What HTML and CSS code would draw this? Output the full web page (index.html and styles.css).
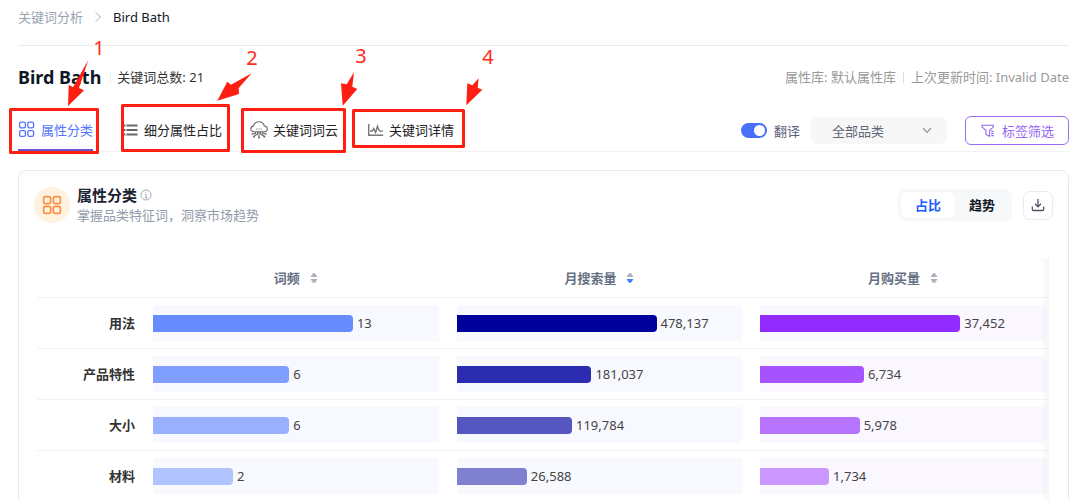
FILE: index.html
```html
<!DOCTYPE html>
<html lang="zh-CN">
<head>
<meta charset="utf-8">
<title>关键词分析 - Bird Bath</title>
<link rel="stylesheet" href="styles.css">
</head>
<body>
<div class="page">
  <nav class="breadcrumb">
    <a href="#" class="crumb">关键词分析</a>
    <svg class="crumb-sep" viewBox="0 0 8 12" width="8" height="12"><path d="M1.5 1.5 6.5 6l-5 4.5"/></svg>
    <span class="crumb-current">Bird Bath</span>
  </nav>

  <header class="heading">
    <h1 class="title">Bird Bath</h1>
    <span class="total">关键词总数: 21</span>
    <div class="meta"><span>属性库: 默认属性库</span><span class="meta-sep"></span><span>上次更新时间: Invalid Date</span></div>
  </header>

  <div class="toolbar">
    <div class="tabs">
      <button class="tab tab-active" type="button">
        <svg class="tab-icon" viewBox="0 0 18 18"><g fill="none" stroke="currentColor" stroke-width="1.3"><rect x="1.6" y="1.1" width="5.8" height="5.8" rx="1.6"/><rect x="9.8" y="1.1" width="5.8" height="5.8" rx="1.6"/><rect x="1.6" y="9.6" width="5.8" height="5.8" rx="1.6"/><rect x="9.8" y="9.6" width="5.8" height="5.8" rx="1.6"/></g></svg>
        属性分类
      </button>
      <button class="tab" type="button">
        <svg class="tab-icon" viewBox="0 0 18 18"><path d="M2.500 4.500h2M2.500 9h2M2.500 13.500h2M5.500 4.500h11M5.500 9h11M5.500 13.500h11" stroke="#6a666c" stroke-width="2"/></svg>
        细分属性占比
      </button>
      <button class="tab" type="button">
        <svg class="tab-icon" viewBox="0 0 18 18"><g fill="none" stroke="#666" stroke-width="1.1"><path d="M4.400 10.800H4C2.200 10.800.8 9.500.8 7.900c0-1.500 1.100-2.600 2.700-2.800C4.100 2.500 6.300.8 9 .8s4.700 1.700 5.300 4.200c1.800.1 3 1.400 3 2.900 0 1.700-1.400 2.900-3.200 2.900h-.6"/><path d="M6.300 8h1M8.500 8h1M10.700 8h1M4.400 10.800h9.200M7.400 10.800v2.400L4 15.300M9 10.800v5M10.700 10.800v2.400l3.600 2.100M5.400 11v1.800H2.800M12.700 11v1.800h2.800"/></g><g fill="#666"><circle cx="2.500" cy="12.800" r=".9"/><circle cx="15.700" cy="12.800" r=".9"/><circle cx="3.900" cy="15.800" r="1"/><circle cx="14.300" cy="15.800" r="1"/><circle cx="9" cy="16.400" r="1"/></g></svg>
        关键词词云
      </button>
      <button class="tab" type="button">
        <svg class="tab-icon" viewBox="0 0 18 18"><g fill="none" stroke="#777" stroke-width="1.4"><path d="M2.700 3v11.300h14.500"/><path d="M4 10h2.200l1.500-2.500 1.900 4 1.900-6.300 1.500 4 1 .9H17"/></g></svg>
        关键词详情
      </button>
    </div>
    <div class="filters">
      <label class="switch-field">
        <input class="switch" type="checkbox" role="switch" checked>
        翻译
      </label>
      <div class="select-box">
        <select class="select" aria-label="品类"><option>全部品类</option></select>
        <svg class="select-arrow" viewBox="0 0 10 7" width="10" height="7"><path d="m1 1 4 4.4L9 1"/></svg>
      </div>
      <button class="tag-button" type="button">
        <svg viewBox="0 0 14 14" width="14" height="14"><path d="M1 1.2h11.4v1.6L8.6 6.6v5.7L5 10.400V6.600L1 2.800zM10.200 7.200h2.600M10.200 9.400h2.600M10.200 11.600h2.600" fill="none" stroke="currentColor" stroke-width="1.1"/></svg>
        标签筛选
      </button>
    </div>
  </div>

  <section class="card">
    <div class="card-head">
      <div class="badge"><svg viewBox="0 0 20 20" width="20" height="20"><g fill="none" stroke="#ff8f45" stroke-width="1.7"><rect x="1.6" y="1.6" width="7" height="7" rx="1.8"/><rect x="11.4" y="1.6" width="7" height="7" rx="1.8"/><rect x="1.6" y="11.4" width="7" height="7" rx="1.8"/><rect x="11.4" y="11.4" width="7" height="7" rx="1.8"/></g></svg></div>
      <div class="card-text">
        <h2 class="card-title">属性分类
          <svg viewBox="0 0 12 12" width="12" height="12"><g fill="none" stroke="#a3abb9"><circle cx="6" cy="6" r="5"/><path d="M5 5.4h1.2V9M4.8 9h2.6M5.4 3.2h1"/></g></svg>
        </h2>
        <p class="card-sub">掌握品类特征词，洞察市场趋势</p>
      </div>
      <div class="segment">
        <button class="segment-item segment-on" type="button">占比</button>
        <button class="segment-item" type="button">趋势</button>
      </div>
      <button class="download" type="button" aria-label="下载">
        <svg viewBox="0 0 14 14" width="14" height="14"><path d="M7 1v7.6M4 5.8l3 3 3-3M1.3 8.6v2.6c0 .8.5 1.3 1.3 1.3h8.8c.8 0 1.3-.5 1.3-1.3V8.6" fill="none" stroke="#4b5565" stroke-width="1.3"/></svg>
      </button>
    </div>

    <div class="table-wrap">
      <table class="table">
        <colgroup><col class="col-name"><col class="col-data"><col class="col-data"><col></colgroup>
        <thead>
          <tr>
            <td></td>
            <th scope="col"><button class="sort" type="button">词频 <svg viewBox="0 0 8 12" width="8" height="12"><path d="M.5 5 3 1.3h2L7.5 5z"/><path d="M.5 7 3 10.7h2L7.5 7z"/></svg></button></th>
            <th scope="col"><button class="sort" type="button">月搜索量 <svg viewBox="0 0 8 12" width="8" height="12"><path d="M.5 5 3 1.3h2L7.5 5z"/><path class="sort-on" d="M.5 7 3 10.7h2L7.5 7z"/></svg></button></th>
            <th scope="col"><button class="sort" type="button">月购买量 <svg viewBox="0 0 8 12" width="8" height="12"><path d="M.5 5 3 1.3h2L7.5 5z"/><path d="M.5 7 3 10.7h2L7.5 7z"/></svg></button></th>
          </tr>
        </thead>
        <tbody>
          <tr>
            <th scope="row">用法</th>
            <td><div class="track"><div class="bar" style="width:70%;background:#668cff"></div>13</div></td>
            <td><div class="track"><div class="bar" style="width:70%;background:#00009c"></div>478,137</div></td>
            <td><div class="track track-buy"><div class="bar" style="width:70%;background:#922bff"></div>37,452</div></td>
          </tr>
          <tr>
            <th scope="row">产品特性</th>
            <td><div class="track"><div class="bar" style="width:47.7%;background:#809eff"></div>6</div></td>
            <td><div class="track"><div class="bar" style="width:47.2%;background:#2c2cb0"></div>181,037</div></td>
            <td><div class="track track-buy"><div class="bar" style="width:36.3%;background:#a552ff"></div>6,734</div></td>
          </tr>
          <tr>
            <th scope="row">大小</th>
            <td><div class="track"><div class="bar" style="width:47.7%;background:#99b0ff"></div>6</div></td>
            <td><div class="track"><div class="bar" style="width:40.4%;background:#5656c0"></div>119,784</div></td>
            <td><div class="track track-buy"><div class="bar" style="width:34.8%;background:#b774ff"></div>5,978</div></td>
          </tr>
          <tr>
            <th scope="row">材料</th>
            <td><div class="track"><div class="bar" style="width:28%;background:#b2c4ff"></div>2</div></td>
            <td><div class="track"><div class="bar" style="width:24.6%;background:#8080d0"></div>26,588</div></td>
            <td><div class="track track-buy"><div class="bar" style="width:24.1%;background:#ca97ff"></div>1,734</div></td>
          </tr>
        </tbody>
      </table>
    </div>
  </section>

  <svg class="notes" width="520" height="160" viewBox="0 0 520 160">
    <g class="note-box">
      <rect x="10.5" y="109.5" width="87" height="43"/>
      <rect x="122.5" y="105.5" width="106" height="45"/>
      <rect x="242.5" y="109.5" width="102" height="42"/>
      <rect x="353.5" y="110.5" width="110" height="36"/>
    </g>
    <g class="note-arrow">
      <path d="M68 106 68.700 84.700 73 87.300 88.300 60 79 88 84 90.300z"/>
      <path d="M217.300 100.700 227.300 81.700 231 84.700 251.700 73.300 238.700 88 239 94z"/>
      <path d="M342.700 105.700 341 83.300 346.700 84.300 354 72.300 352.300 86.700 357.300 89z"/>
      <path d="M466.300 105.300 467.300 83.300 472.300 85.300 478.700 78.300 477.700 87.700 482.300 89.700z"/>
    </g>
    <g class="note-number">
      <text x="99" y="55">1</text>
      <text x="252" y="65">2</text>
      <text x="361" y="63">3</text>
      <text x="488" y="64">4</text>
    </g>
  </svg>
</div>
</body>
</html>
```
FILE: styles.css
```css
* { box-sizing: border-box; }

body {
  margin: 0;
  background: #fff;
  color: #333;
  font: 13px/20px "Noto Sans", "Noto Sans CJK SC", sans-serif;
}

button, select { font: inherit; color: inherit; }
button { border: 0; background: none; padding: 0; cursor: pointer; }
svg { display: block; flex: none; }

.page {
  position: relative;
  height: 100vh;
  padding: 0 11px 0 18px;
  overflow: hidden;
}

.breadcrumb {
  display: flex;
  align-items: center;
  gap: 11px;
  padding: 7px 0 18px;
  border-bottom: 1px solid #ebebee;
}
.crumb { color: #9aa3b2; text-decoration: none; }
.crumb-sep { fill: none; stroke: #ccd1dc; stroke-width: 1.3; }
.crumb-current { color: #101828; }

.heading {
  display: flex;
  align-items: center;
  padding: 19px 0;
}
.title {
  margin: 0;
  color: #101828;
  font-size: 18px;
  line-height: 24px;
  padding-right: 9px;
}
.total { position: relative; padding-left: 7px; }
.total::before, .meta-sep {
  content: "";
  width: 1px;
  height: 11px;
  background: #ddd;
}
.total::before { position: absolute; left: 0; top: 5px; background: #eee; }
.meta {
  display: flex;
  align-items: center;
  gap: 7px;
  margin-left: auto;
  color: #999;
}

.toolbar {
  display: flex;
  justify-content: space-between;
  height: 44px;
  border-bottom: 1px solid #f2f2f4;
}
.tabs { display: flex; gap: 28px; }
.tab {
  display: flex;
  align-items: center;
  gap: 5px;
  padding-top: 3px;
  border-bottom: 2px solid transparent;
  color: #222;
  white-space: nowrap;
}
.tab-icon { width: 18px; height: 18px; }
.tab-active { color: #5274ff; border-color: #6a52d0; }

.filters { display: flex; align-items: center; gap: 18px; padding-top: 2px; }
.switch-field {
  display: flex;
  align-items: center;
  gap: 7px;
  margin-right: -7px;
  color: #5c6078;
}
.switch {
  appearance: none;
  display: flex;
  width: 26px;
  height: 15px;
  margin: 0;
  padding: 2px;
  border-radius: 8px;
  background: #4a70fb;
}
.switch::before {
  content: "";
  width: 11px;
  height: 11px;
  margin-left: auto;
  border-radius: 50%;
  background: #fff;
}
.select-box { position: relative; }
.select {
  appearance: none;
  width: 136px;
  height: 27px;
  padding: 0 21px;
  border: 0;
  border-radius: 7px;
  background: #f7f7f8;
  color: #5c6675;
}
.select-arrow {
  position: absolute;
  right: 15px;
  top: 10px;
  fill: none;
  stroke: #8b92a0;
  stroke-width: 1.2;
  pointer-events: none;
}
.tag-button {
  display: flex;
  align-items: center;
  gap: 7px;
  height: 29px;
  padding: 0 14px 0 15px;
  border: 1px solid #9c6bf5;
  border-radius: 6px;
  color: #9566f2;
}

.card {
  margin-top: 18px;
  padding: 14px 19px 20px 18px;
  border: 1px solid #e8e9ec;
  border-radius: 8px;
}
.card-head { display: flex; align-items: center; }
.badge {
  display: flex;
  align-items: center;
  justify-content: center;
  width: 36px;
  height: 36px;
  margin-left: -3px;
  border-radius: 50%;
  background: #fff2df;
}
.card-text { margin: 0 auto 0 7px; }
.card-title {
  display: flex;
  align-items: center;
  gap: 3px;
  margin: 0;
  color: #1b2230;
  font-size: 15px;
  line-height: 20px;
}
.card-sub { margin: 0; color: #929bab; }
.segment {
  display: flex;
  padding: 3px;
  border-radius: 8px;
  background: #f7f8fa;
}
.segment-item {
  padding: 3px 14px;
  border-radius: 7px;
  color: #101828;
  font-weight: 700;
}
.segment-on { background: #fff; color: #1b60ff; }
.download {
  display: flex;
  align-items: center;
  justify-content: center;
  width: 30px;
  height: 29px;
  margin: 0 -4px 0 11px;
  border: 1px solid #e9ebf0;
  border-radius: 7px;
}

.table-wrap { position: relative; margin-top: 33px; }
.table-wrap::after {
  content: "";
  position: absolute;
  top: 0;
  right: 0;
  bottom: 0;
  width: 8px;
  background: linear-gradient(to right, transparent, rgba(0, 0, 0, 0.04));
}
.table {
  width: 100%;
  table-layout: fixed;
  border-collapse: collapse;
}
.col-name { width: 116px; }
.col-data { width: 30%; }
.table tr { border-bottom: 1px solid #f1f2f4; }
.table th, .table td { padding: 7px 18px 7px 0; }
.table th:last-child, .table td:last-child { padding-right: 3px; }
.table thead th { padding-top: 10px; padding-bottom: 9px; }
.table tbody th { text-align: right; color: #333; }
.sort {
  display: inline-flex;
  align-items: center;
  gap: 10px;
  color: #667085;
  font-weight: 700;
}
.sort path { fill: #a9b1c1; }
.sort .sort-on { fill: #3f7cff; }
.track {
  display: flex;
  align-items: center;
  gap: 4px;
  height: 36px;
  background: #f8f9ff;
  color: #444;
}
.track-buy { background: #faf7ff; }
.bar { height: 17px; border-radius: 0 4px 4px 0; }

.notes {
  position: absolute;
  left: 0;
  top: 0;
  pointer-events: none;
}
.note-box { fill: none; stroke: #ff1e12; stroke-width: 3px; stroke-linejoin: round; }
.note-arrow { fill: #ff1e12; }
.note-number { fill: #ff2a20; font-size: 20px; text-anchor: middle; }
```
